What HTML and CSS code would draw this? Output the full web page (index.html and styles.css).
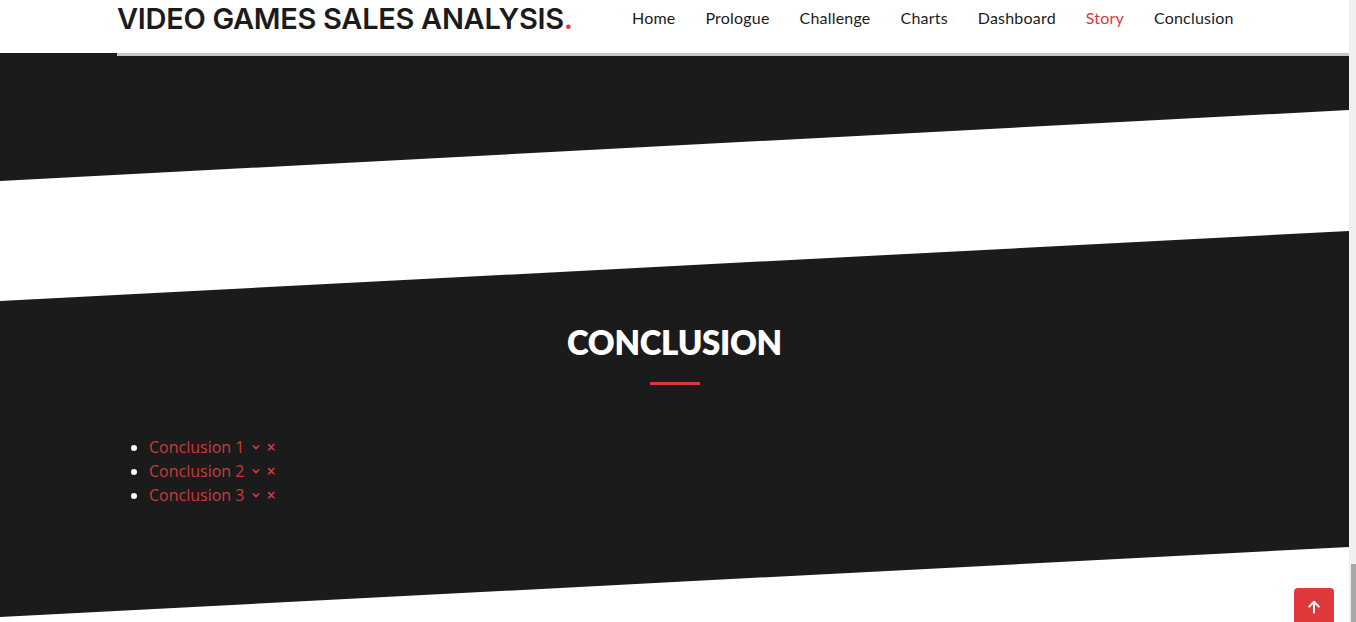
FILE: index.html
```html
<!DOCTYPE html>
<html lang="en">
<head>
<meta charset="utf-8">
<title>Video Games Sales Analysis</title>
<link rel="stylesheet" href="styles.css">
</head>
<body>
<div class="page">
  <main class="main">
    <header class="header">
      <div class="bar">
        <div class="logo">VIDEO GAMES SALES ANALYSIS<span class="dot">.</span></div>
        <nav class="nav">
          <a class="nav-link" href="#">Home</a>
          <a class="nav-link" href="#">Prologue</a>
          <a class="nav-link" href="#">Challenge</a>
          <a class="nav-link" href="#">Charts</a>
          <a class="nav-link" href="#">Dashboard</a>
          <a class="nav-link active" href="#">Story</a>
          <a class="nav-link" href="#">Conclusion</a>
        </nav>
      </div>
    </header>
    <section class="band band-top"></section>
    <section class="band band-conclusion">
      <h2 class="title">CONCLUSION</h2>
      <div class="title-rule"></div>
      <ul class="list">
        <li><a class="item" href="#">Conclusion 1</a><svg class="chev" width="8" height="6" viewBox="0 0 8 6"><path d="M1 1.5l3 3 3-3" fill="none" stroke="#d93b40" stroke-width="1.6"/></svg><span class="close">&times;</span></li>
        <li><a class="item" href="#">Conclusion 2</a><svg class="chev" width="8" height="6" viewBox="0 0 8 6"><path d="M1 1.5l3 3 3-3" fill="none" stroke="#d93b40" stroke-width="1.6"/></svg><span class="close">&times;</span></li>
        <li><a class="item" href="#">Conclusion 3</a><svg class="chev" width="8" height="6" viewBox="0 0 8 6"><path d="M1 1.5l3 3 3-3" fill="none" stroke="#d93b40" stroke-width="1.6"/></svg><span class="close">&times;</span></li>
      </ul>
    </section>
    <a class="to-top" href="#" aria-label="Back to top">
      <svg width="16" height="16" viewBox="0 0 16 16"><path d="M8 13.5V3M3.2 7.6L8 2.8l4.8 4.8" fill="none" stroke="#fff" stroke-width="2" stroke-linecap="round" stroke-linejoin="round"/></svg>
    </a>
  </main>
  <aside class="scrollbar"><div class="thumb"></div></aside>
</div>
</body>
</html>
```
FILE: styles.css
```css
* { box-sizing: border-box; }
html, body { margin: 0; padding: 0; height: 100%; overflow: hidden; background: #fff; }
body { font-family: "Open Sans", sans-serif; }

.page { display: flex; height: 622px; }
.main { position: relative; flex: 1; height: 622px; overflow: hidden; }

.header {
  position: absolute; top: 0; left: 0; right: 0;
  height: 53px; background: #fff; z-index: 5;
}
.bar {
  margin-left: 117px; height: 56px;
  border-bottom: 3px solid #c6c6c6;
  display: flex; align-items: flex-start;
}
.logo {
  font-family: "Inter", sans-serif; font-weight: 600;
  font-size: 29px; line-height: 38px; color: #1b1b1b;
  letter-spacing: -0.3px; width: 500px;
}
.dot { color: #e0383c; }
.nav { display: flex; padding-top: 8px; }
.nav-link {
  font-family: "Lato", sans-serif; font-size: 16px; letter-spacing: 0.2px; color: #1b1b1b;
  text-decoration: none; padding: 0 15px; line-height: 20px;
}
.nav-link.active { color: #d9393c; }

.band { background: #1b1b1b; }
.band-top {
  height: 181px;
  clip-path: polygon(0 0, 100% 0, 100% 110px, 0 181px);
}
.band-conclusion {
  margin-top: 50px; height: 386px;
  clip-path: polygon(0 70px, 100% 0, 100% 316px, 0 386px);
  padding-top: 89px; color: #fff;
}
.title {
  margin: 0; text-align: center;
  font-family: "Lato", sans-serif; font-weight: 800; font-size: 33px;
  line-height: 44px; letter-spacing: -0.3px; color: #fff;
}
.title-rule { width: 50px; height: 3px; background: #d9393c; margin: 18px auto 0; }
.list {
  margin: 50px 0 0 0; padding-left: 149px;
  font-size: 16px; line-height: 24px; color: #fff;
}
.list li { height: 24px; }
.item { color: #c93b3f; text-decoration: none; }
.chev { display: inline-block; margin-left: 8px; vertical-align: 3px; }
.close { display: inline-block; line-height: 1; color: #d93b40; font-size: 16px; margin-left: 6px; font-weight: 600; }

.to-top {
  position: absolute; right: 15px; top: 588px;
  width: 40px; height: 40px; border-radius: 4px;
  background: #e0393c; display: flex; justify-content: center; padding-top: 11px;
  z-index: 6;
}
.to-top svg { display: block; }

.scrollbar { width: 7px; background: #f0f0f0; height: 622px; position: relative; }
.thumb { position: absolute; left: 2px; right: 0; bottom: 0; height: 58px; background: #a8a8a8; }
```
